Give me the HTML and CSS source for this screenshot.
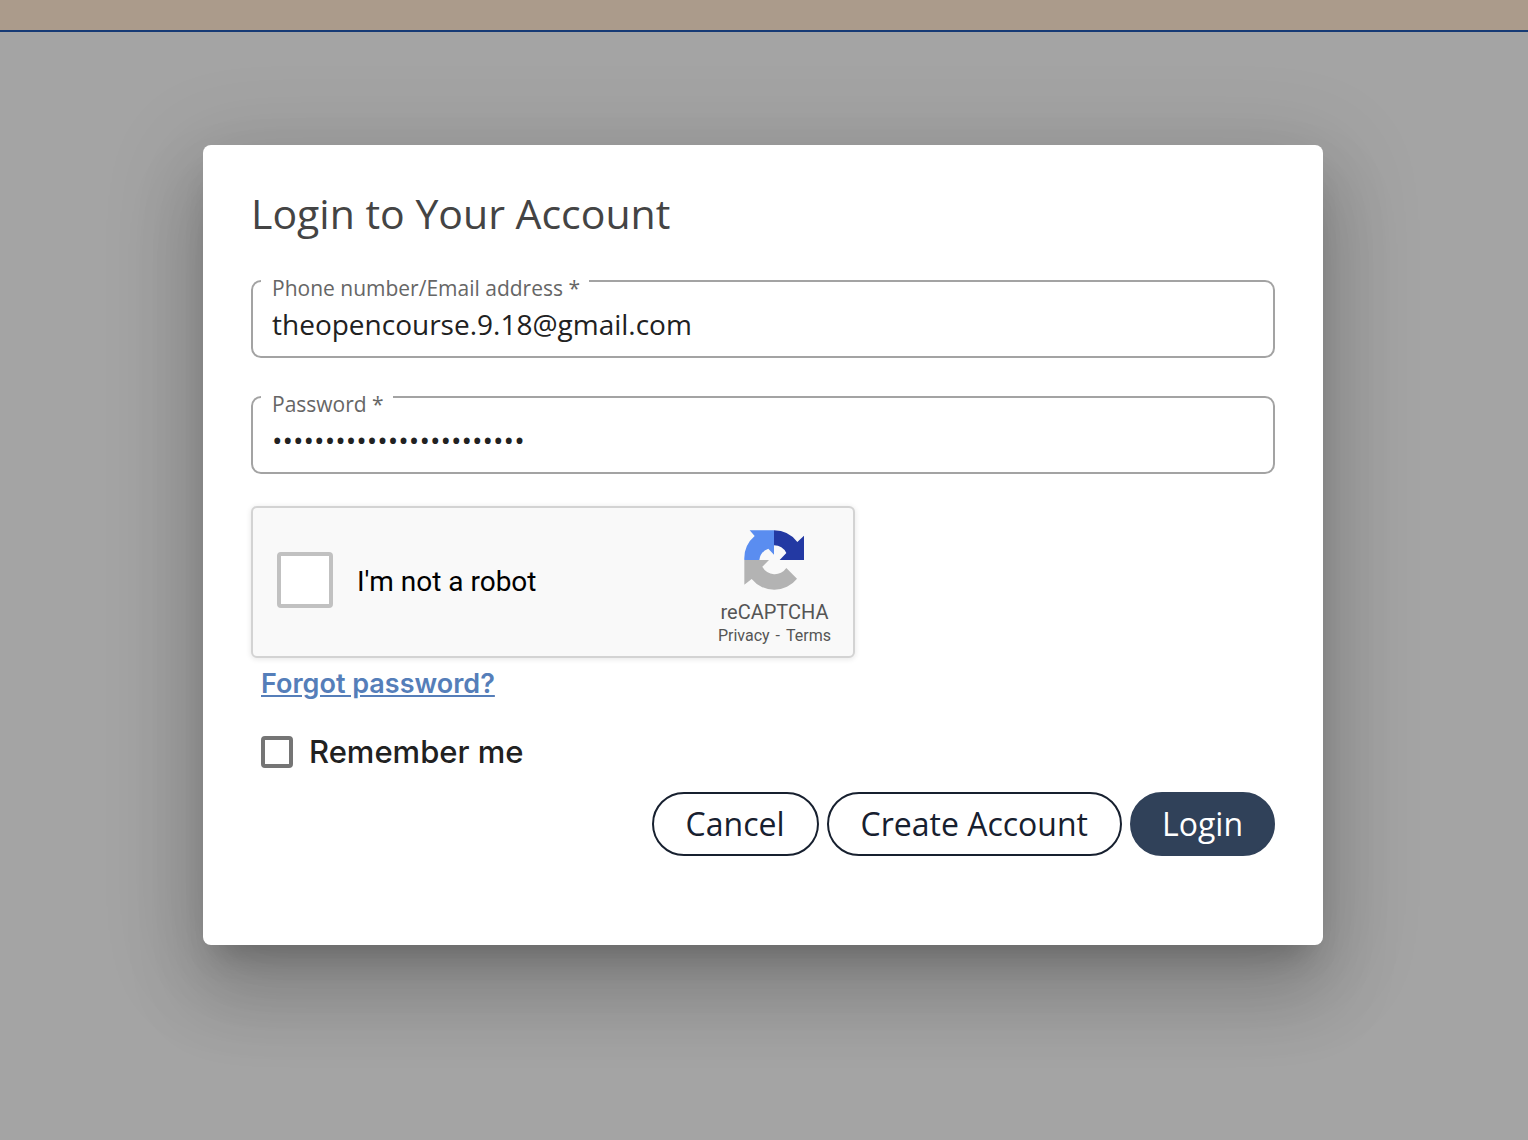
FILE: index.html
```html
<!DOCTYPE html>
<html lang="en">
<head>
<meta charset="utf-8">
<meta name="viewport" content="width=device-width, initial-scale=1">
<title>Login</title>
<link rel="stylesheet" href="styles.css">
</head>
<body>
<div class="page-banner"></div>
<main class="backdrop">
  <section class="dialog" role="dialog" aria-labelledby="dialog-title">
    <h1 class="dialog-title" id="dialog-title">Login to Your Account</h1>
    <form class="login-form">
      <div class="field">
        <label class="field-label" for="account">Phone number/Email address *</label>
        <input class="field-input" id="account" type="text" value="theopencourse.9.18@gmail.com">
      </div>
      <div class="field">
        <label class="field-label" for="password">Password *</label>
        <input class="field-input" id="password" type="password" value="abcdefghijklmnopqrstuvwx">
      </div>
      <div class="captcha">
        <input class="captcha-box" id="robot" type="checkbox">
        <label class="captcha-label" for="robot">I'm not a robot</label>
        <div class="captcha-brand">
          <svg class="captcha-logo" viewBox="30 30 180 180" aria-hidden="true">
            <path fill="#2339a3" d="M120 31A89 89 0 0 1 190 66L210 47V120H137L157 99A42 42 0 0 0 120 76Z"/>
            <path fill="#5a8df0" d="M47 31H120V104L103 86A42 42 0 0 0 76 120H31A89 89 0 0 1 62 48Z"/>
            <path fill="#b3b3b3" d="M31 120H105L85 140A42 42 0 0 0 157 144L189 176A87 87 0 0 1 53 177L31 194Z"/>
          </svg>
          <span class="captcha-name">reCAPTCHA</span>
          <span class="captcha-links"><a href="#">Privacy</a><span>-</span><a href="#">Terms</a></span>
        </div>
      </div>
      <a class="forgot" href="#">Forgot password?</a>
      <div class="remember">
        <input class="remember-box" id="remember" type="checkbox">
        <label class="remember-label" for="remember">Remember me</label>
      </div>
      <div class="actions">
        <button class="button" type="button">Cancel</button>
        <button class="button" type="button">Create Account</button>
        <button class="button button-primary" type="submit">Login</button>
      </div>
    </form>
  </section>
</main>
</body>
</html>
```
FILE: styles.css
```css
* {
  box-sizing: border-box;
}

body {
  margin: 0;
  min-height: 100vh;
  display: flex;
  flex-direction: column;
  background: #a4a4a4;
  color: #212121;
  font-family: "Open Sans", sans-serif;
}

.page-banner {
  height: 32px;
  background: #ab9b8b;
  border-bottom: 2px solid #163a75;
}

.backdrop {
  flex: 1;
  padding: 113px 26px 64px 24px;
}

.dialog {
  max-width: 1120px;
  margin: 0 auto;
  padding: 40px 48px 89px;
  background: #fff;
  border-radius: 8px;
  box-shadow:
    0 22px 30px -14px rgba(0, 0, 0, 0.2),
    0 48px 76px 6px rgba(0, 0, 0, 0.14),
    0 18px 92px 16px rgba(0, 0, 0, 0.12);
}

.dialog-title {
  margin: 0 0 39px;
  color: #444;
  font-size: 41px;
  font-weight: 500;
  line-height: 56px;
}

.login-form {
  display: flex;
  flex-direction: column;
}

.field {
  position: relative;
  height: 78px;
  margin-bottom: 38px;
  border: 2px solid #a3a3a3;
  border-radius: 10px;
}

.field + .captcha {
  margin-top: -6px;
}

.field-label {
  position: absolute;
  top: -6px;
  left: 8px;
  padding: 0 9px 0 11px;
  background: #fff;
  color: #666;
  font-size: 21px;
  line-height: 24px;
}

.field-input {
  display: block;
  width: 100%;
  height: 100%;
  padding: 10px 19px 0;
  border: 0;
  outline: 0;
  background: none;
  color: #212121;
  font: 28px "Open Sans", sans-serif;
}

.captcha {
  display: flex;
  align-items: center;
  width: 604px;
  max-width: 100%;
  height: 152px;
  padding: 0 22px 4px 24px;
  border: 2px solid #d3d3d3;
  border-radius: 6px;
  background: #f9f9f9;
  box-shadow: 0 1px 5px 1px rgba(0, 0, 0, 0.08);
  font-family: Roboto, sans-serif;
}

.captcha-box,
.remember-box {
  appearance: none;
  flex: none;
  margin: 0;
  border: 4px solid #c1c1c1;
  border-radius: 4px;
  background: #fff;
}

.captcha-box {
  width: 56px;
  height: 56px;
}

.captcha-label {
  margin-left: 24px;
  padding-top: 2px;
  color: #000;
  font-size: 28px;
}

.captcha-brand {
  display: flex;
  flex-direction: column;
  align-items: center;
  margin-left: auto;
  padding-top: 18px;
  color: #555;
}

.captcha-logo {
  width: 60px;
  height: 60px;
}

.captcha-name {
  margin-top: 10px;
  font-size: 20px;
  line-height: 24px;
}

.captcha-links {
  display: flex;
  gap: 6px;
  font-size: 16px;
  line-height: 24px;
}

.captcha-links a {
  color: inherit;
  text-decoration: none;
}

.forgot {
  align-self: flex-start;
  margin: 8px 0 0 10px;
  color: #557eb9;
  font-family: Inter, sans-serif;
  font-size: 27px;
  font-weight: 600;
  line-height: 36px;
}

.remember {
  display: flex;
  align-items: center;
  gap: 16px;
  margin: 30px 0 0 10px;
}

.remember-box {
  width: 32px;
  height: 32px;
  border-color: #757575;
}

.remember-label {
  font-family: Inter, sans-serif;
  font-size: 31px;
  font-weight: 500;
  line-height: 40px;
}

.actions {
  display: flex;
  flex-wrap: wrap;
  justify-content: flex-end;
  gap: 8px;
  margin-top: 20px;
}

.button {
  height: 64px;
  padding: 0 32px 2px;
  border: 2px solid #17202f;
  border-radius: 32px;
  background: #fff;
  color: #17202f;
  font: 32px "Open Sans", sans-serif;
}

.button-primary {
  padding: 0 30px 2px;
  border-color: #304159;
  background: #304159;
  color: #fff;
}
```
